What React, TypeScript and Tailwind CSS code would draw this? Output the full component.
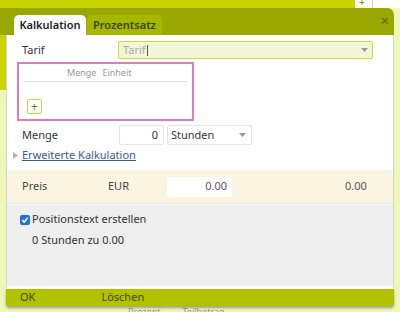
import React from "react";

function Caret({ className = "" }: { className?: string }) {
  return (
    <svg width="7" height="4" viewBox="0 0 7 4" className={className}>
      <path d="M0 0 L7 0 L3.5 4 Z" fill="#9a9a9a" />
    </svg>
  );
}

export default function App() {
  return (
    <div
      className="relative w-[400px] h-[312px] overflow-hidden bg-[#eef6b8] text-[#333]"
      style={{ fontFamily: "'Noto Sans', 'Open Sans', sans-serif" }}
    >
      {/* background page */}
      <div className="flex h-[8px]">
        <div className="flex-1 bg-[#c8d500]" />
        <div className="w-[45px] bg-white relative">
          <span className="absolute left-[4px] -top-[3px] text-[10px] leading-none text-[#7a8a20]">+</span>
          <div className="absolute left-[17px] top-0 h-full w-px bg-[#ccc]" />
        </div>
      </div>
      <div className="absolute left-0 top-[8px] w-[6px] h-[82px] bg-[#c8d500]" />
      <div className="absolute left-[128px] top-[307px] text-[9px] text-[#999] leading-none flex gap-[22px]">
        <span>Prozent</span>
        <span>Teilbetrag</span>
      </div>

      {/* dialog */}
      <div className="absolute left-0 top-[8px] w-[394px] flex flex-col">
        {/* header */}
        <div className="h-[27px] bg-[#98a800] rounded-tr-[7px] flex items-end pl-[14px] relative">
          <div className="h-[20px] w-[72px] bg-white rounded-t-[5px] flex items-center justify-center text-[11px] font-semibold text-[#222]">
            Kalkulation
          </div>
          <div className="h-[20px] w-[75px] ml-[1px] bg-[#a6b700] rounded-t-[5px] flex items-center justify-center text-[11px] font-semibold text-[#3d4400]">
            Prozentsatz
          </div>
          <span className="absolute right-[5px] top-[5px] text-[15px] leading-none text-[#5b6600]">×</span>
        </div>

        {/* body */}
        <div className="ml-[6px] w-[388px] border-l border-r border-[#d4d4d4] flex flex-col">
          <div className="bg-white pt-[6px] h-[135px] flex flex-col">
            {/* Tarif */}
            <div className="flex items-center h-[18px]">
              <span className="w-[111px] pl-[15px] text-[11px]">Tarif</span>
              <div className="w-[255px] h-[18px] bg-[#f3f6d6] border border-[#cfdc3a] rounded-[2px] flex items-center pl-[4px] pr-[4px]">
                <span className="text-[11px] text-[#aaa]">Tarif</span>
                <span className="w-px h-[11px] bg-[#555] ml-[1px]" />
                <div className="flex-1" />
                <Caret />
              </div>
            </div>
            {/* pink box */}
            <div className="ml-[10px] mt-[3px] w-[177px] h-[59px] border-2 border-[#e27bb8] flex flex-col">
              <div className="flex h-[18px] items-center text-[9px] text-[#9a9a9a] mx-[4px] border-b border-[#e2e2e2]">
                <span className="ml-[44px]">Menge</span>
                <span className="ml-[6px]">Einheit</span>
              </div>
              <div className="flex-1 flex items-end pb-[5px] pl-[8px]">
                <div className="w-[15px] h-[15px] border border-[#c5d43a] rounded-[2px] bg-white flex items-center justify-center text-[12px] leading-none text-[#4c8a1e]">
                  +
                </div>
              </div>
            </div>
            {/* Menge */}
            <div className="flex items-center h-[20px] mt-[4px]">
              <span className="w-[112px] pl-[15px] text-[11px]">Menge</span>
              <div className="w-[45px] h-[20px] border border-[#e4e4e4] rounded-[2px] flex items-center justify-end pr-[5px] text-[11px]">
                0
              </div>
              <div className="ml-[3px] w-[85px] h-[20px] border border-[#e4e4e4] rounded-[2px] flex items-center pl-[3px] pr-[5px] text-[11px]">
                <span className="flex-1">Stunden</span>
                <Caret />
              </div>
            </div>
            {/* link */}
            <div className="flex items-center h-[14px] mt-[3px] pl-[6px]">
              <svg width="5" height="7" viewBox="0 0 5 7" className="mr-[4px]">
                <path d="M0 0 L5 3.5 L0 7 Z" fill="#b5b5b5" />
              </svg>
              <span className="text-[11px] text-[#3b5a96] underline">Erweiterte Kalkulation</span>
            </div>
          </div>

          {/* Preis row */}
          <div className="h-[33px] bg-[#faf4e1] flex items-center text-[11px] text-[#444]">
            <span className="w-[101px] pl-[15px]">Preis</span>
            <span className="w-[59px]">EUR</span>
            <div className="w-[65px] h-[20px] bg-white rounded-[2px] flex items-center justify-end pr-[5px] text-[#555]">
              0.00
            </div>
            <span className="ml-[113px] text-[#555]">0.00</span>
          </div>
          <div className="h-[2px] bg-[#f6f6f6] border-t border-[#e8e8e8]" />

          {/* grey section */}
          <div className="h-[81px] bg-[#eeeeee] flex flex-col pt-[7px] pl-[13px] text-[11px]">
            <label className="flex items-center h-[15px]">
              <span className="w-[10px] h-[10px] bg-[#1f73d6] rounded-[2px] flex items-center justify-center mr-[2px]">
                <svg width="8" height="8" viewBox="0 0 8 8">
                  <path d="M1.3 4.2 L3.2 6 L6.8 1.8" stroke="white" strokeWidth="1.6" fill="none" />
                </svg>
              </span>
              <span>Positionstext erstellen</span>
            </label>
            <div className="pl-[12px] mt-[5px]">0 Stunden zu 0.00</div>
          </div>
          <div className="h-[3px] bg-white" />
        </div>

        {/* footer */}
        <div className="ml-[6px] w-[388px] h-[17px] bg-[#b3c200] rounded-b-[3px] shadow-[0_2px_3px_rgba(0,0,0,0.35)] flex items-center text-[11px] text-[#404800]">
          <span className="ml-[14px]">OK</span>
          <span className="ml-[66px]">Löschen</span>
        </div>
      </div>
    </div>
  );
}
